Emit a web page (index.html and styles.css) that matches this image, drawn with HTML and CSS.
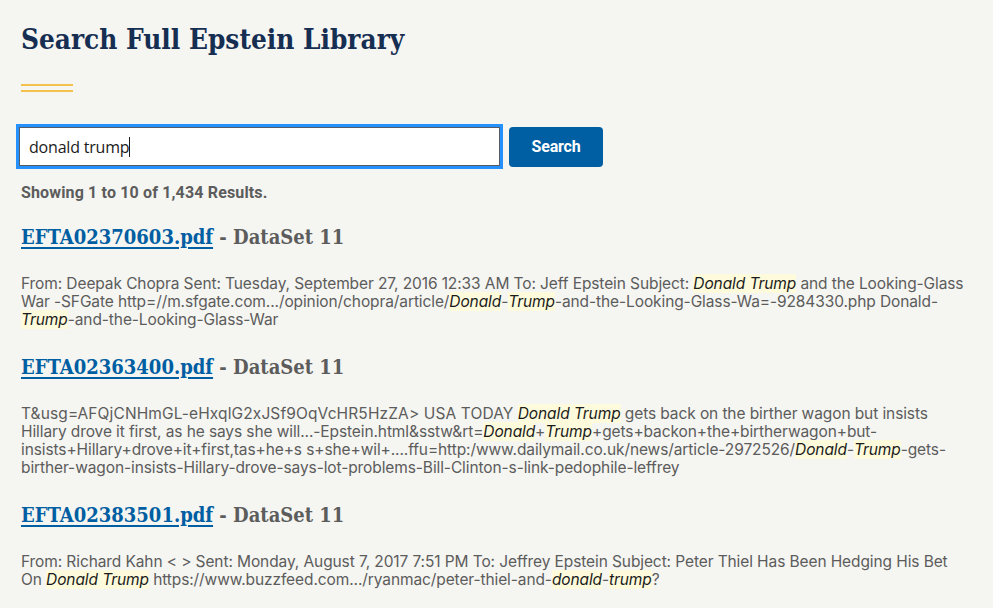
FILE: index.html
```html
<!DOCTYPE html>
<html>
<head>
<meta charset="utf-8">
<link rel="stylesheet" href="styles.css">
</head>
<body>
<main class="page">
  <h1 class="title">Search Full Epstein Library</h1>
  <div class="rule"></div>
  <form class="search">
    <div class="input-wrap"><div class="input">donald trump<span class="caret"></span></div></div>
    <button type="button" class="btn">Search</button>
  </form>
  <p class="count">Showing 1 to 10 of 1,434 Results.</p>

  <section class="result">
    <h2 class="res-title"><a href="#">EFTA02370603.pdf</a> - DataSet 11</h2>
    <p class="snippet">From: Deepak Chopra Sent: Tuesday, September 27, 2016 12:33 AM To: Jeff Epstein Subject: <em>Donald Trump</em> and the Looking-Glass War -SFGate http=//m.sfgate.com.../opinion/chopra/article/<em>Donald</em>-<em>Trump</em>-and-the-Looking-Glass-Wa=-9284330.php Donald-<em>Trump</em>-and-the-Looking-Glass-War</p>
  </section>

  <section class="result">
    <h2 class="res-title"><a href="#">EFTA02363400.pdf</a> - DataSet 11</h2>
    <p class="snippet"><span class="wide">T&amp;usg=AFQjCNHmGL-eHxqlG2xJSf9OqVcHR5HzZA&gt; USA TODAY</span> <em>Donald Trump</em> gets back on the birther wagon but insists Hillary drove it first, as he says she will...-Epstein.html&amp;sstw&amp;rt=<em>Donald</em>+<em>Trump</em>+gets+backon+the+birtherwagon+but-insists+Hillary+drove+it+first,tas+he+s s+she+wil+....ffu=http:/www.dailymail.co.uk/news/article-2972526/<em>Donald</em>-<em>Trump</em>-gets-birther-wagon-insists-Hillary-drove-says-lot-problems-Bill-Clinton-s-link-pedophile-leffrey</p>
  </section>

  <section class="result">
    <h2 class="res-title"><a href="#">EFTA02383501.pdf</a> - DataSet 11</h2>
    <p class="snippet">From: Richard Kahn &lt; &gt; Sent: Monday, August 7, 2017 7:51 PM To: Jeffrey Epstein Subject: Peter Thiel Has Been Hedging His Bet On <em>Donald Trump</em> https://www.buzzfeed.com.../ryanmac/peter-thiel-and-<em>donald</em>-<em>trump</em>?</p>
  </section>
</main>
</body>
</html>
```
FILE: styles.css
```css
html, body {
  margin: 0;
  padding: 0;
  background: #f5f5f1;
}
.page {
  padding: 22px 21px 0 21px;
  font-family: "Open Sans", "Liberation Sans", sans-serif;
  color: #5c5c5c;
}
.title {
  margin: 0;
  font-family: "DejaVu Serif Condensed", "DejaVu Serif", serif;
  font-stretch: condensed;
  font-weight: bold;
  font-size: 27.7px;
  line-height: 36px;
  color: #162e51;
}
.rule {
  margin-top: 26px;
  width: 52px;
  height: 8px;
  border-top: 2px solid #f2c14e;
  border-bottom: 2px solid #f2c14e;
  box-sizing: border-box;
}
.search {
  display: flex;
  align-items: center;
  gap: 6px;
  margin: 32px 0 0 -5px;
}
.input-wrap {
  width: 481px;
  height: 39px;
  border: 3px solid #2491ff;
  background: #fff;
}
.input {
  border: 1px solid #565c65;
  box-sizing: border-box;
  height: 39px;
  padding: 0 9px;
  display: flex;
  align-items: center;
  font-size: 16px;
  color: #1b1b1b;
  font-family: "Open Sans", "Liberation Sans", sans-serif;
  letter-spacing: -0.2px;
}
.caret {
  display: inline-block;
  width: 1px;
  height: 20px;
  background: #1b1b1b;
}
.btn {
  width: 94px;
  height: 40px;
  border: 0;
  border-radius: 4px;
  background: #005ea2;
  color: #fff;
  font-family: "Roboto", "Liberation Sans", sans-serif;
  font-weight: bold;
  font-size: 16px;
  letter-spacing: -0.2px;
}
.count {
  margin: 14px 0 0 0;
  font-family: "Roboto", "Liberation Sans", sans-serif;
  font-weight: bold;
  font-size: 16px;
  line-height: 20px;
  letter-spacing: 0.15px;
  color: #5c5c5c;
}
.result {
  margin-top: 20px;
}
.result + .result {
  margin-top: 24px;
}
.res-title {
  margin: 0;
  font-family: "DejaVu Serif Condensed", "DejaVu Serif", serif;
  font-stretch: condensed;
  font-weight: bold;
  font-size: 20px;
  line-height: 28px;
  color: #5c5c5c;
}
.res-title a {
  color: #005ea2;
  text-decoration: underline;
  text-decoration-thickness: 2px;
  text-underline-offset: 3px;
}
.snippet {
  margin: 24px 0 0 0;
  font-family: "Inter", "Open Sans", sans-serif;
  font-size: 15.5px;
  line-height: 18px;
  color: #5c5c5c;
  letter-spacing: -0.1px;
}
.snippet .wide {
  letter-spacing: 0.12px;
}
.snippet em {
  color: #1b1b1b;
  background: #fefbdc;
  font-style: italic;
}
```
